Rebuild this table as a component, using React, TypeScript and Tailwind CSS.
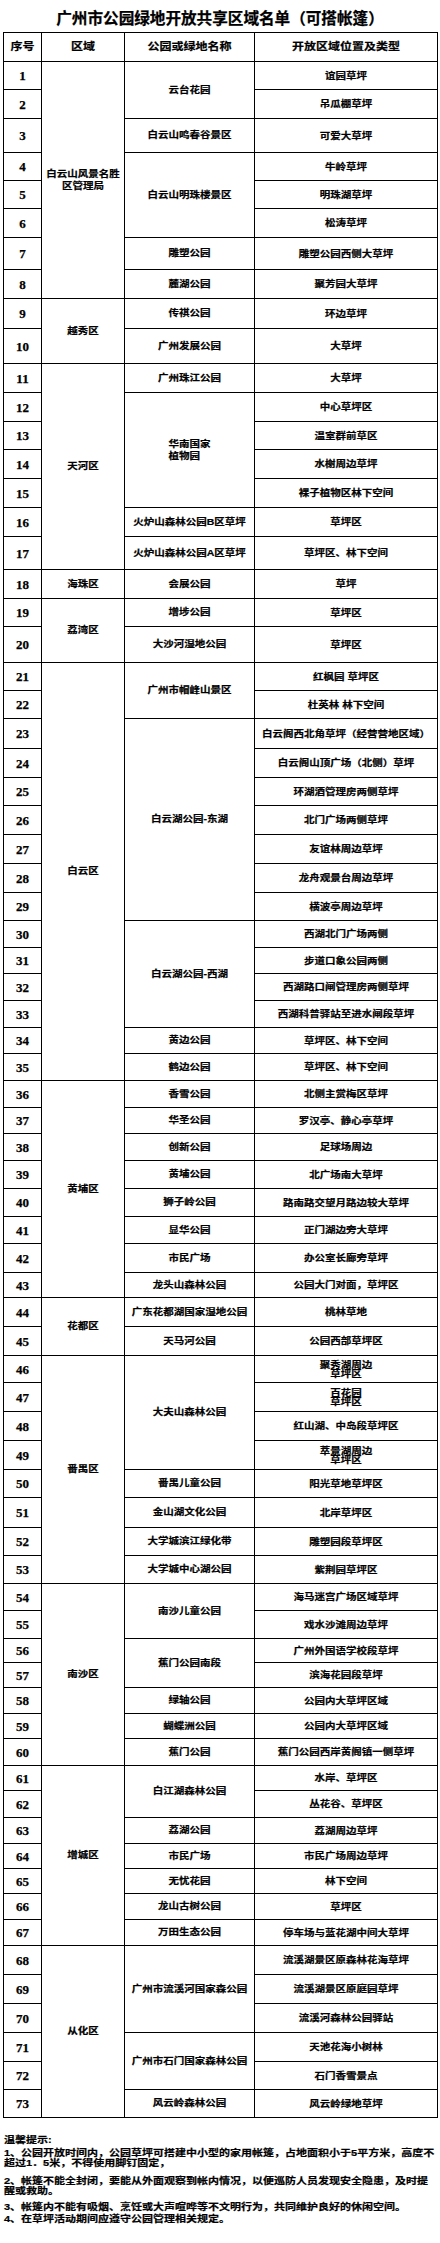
import React from 'react';

type Park = { p: string; items: string[]; left?: boolean };
type District = { d: string; parks: Park[] };

const DATA: District[] = [
  {
    d: '白云山风景名胜\n区管理局',
    parks: [
      { p: '云台花园', items: ['谊园草坪', '吊瓜棚草坪'] },
      { p: '白云山鸣春谷景区', items: ['可爱大草坪'] },
      { p: '白云山明珠楼景区', items: ['牛岭草坪', '明珠湖草坪', '松涛草坪'] },
      { p: '雕塑公园', items: ['雕塑公园西侧大草坪'] },
      { p: '麓湖公园', items: ['聚芳园大草坪'] },
    ],
  },
  {
    d: '越秀区',
    parks: [
      { p: '传祺公园', items: ['环边草坪'] },
      { p: '广州发展公园', items: ['大草坪'] },
    ],
  },
  {
    d: '天河区',
    parks: [
      { p: '广州珠江公园', items: ['大草坪'] },
      { p: '华南国家\n植物园', left: true, items: ['中心草坪区', '温室群前草区', '水榭周边草坪', '裸子植物区林下空间'] },
      { p: '火炉山森林公园B区草坪', items: ['草坪区'] },
      { p: '火炉山森林公园A区草坪', items: ['草坪区、林下空间'] },
    ],
  },
  { d: '海珠区', parks: [{ p: '会展公园', items: ['草坪'] }] },
  {
    d: '荔湾区',
    parks: [
      { p: '增埗公园', items: ['草坪区'] },
      { p: '大沙河湿地公园', items: ['草坪区'] },
    ],
  },
  {
    d: '白云区',
    parks: [
      { p: '广州市帽峰山景区', items: ['红枫园 草坪区', '杜英林 林下空间'] },
      {
        p: '白云湖公园-东湖',
        items: [
          '白云阁西北角草坪（经营营地区域）',
          '白云阁山顶广场（北侧）草坪',
          '环湖酒管理房两侧草坪',
          '北门广场两侧草坪',
          '友谊林周边草坪',
          '龙舟观景台周边草坪',
          '横波亭周边草坪',
        ],
      },
      {
        p: '白云湖公园-西湖',
        items: ['西湖北门广场两侧', '步道口象公园两侧', '西湖路口闸管理房两侧草坪', '西湖科普驿站至进水闸段草坪'],
      },
      { p: '黄边公园', items: ['草坪区、林下空间'] },
      { p: '鹤边公园', items: ['草坪区、林下空间'] },
    ],
  },
  {
    d: '黄埔区',
    parks: [
      { p: '香雪公园', items: ['北侧主赏梅区草坪'] },
      { p: '华圣公园', items: ['罗汉亭、静心亭草坪'] },
      { p: '创新公园', items: ['足球场周边'] },
      { p: '黄埔公园', items: ['北广场南大草坪'] },
      { p: '狮子岭公园', items: ['路南路交望月路边较大草坪'] },
      { p: '显华公园', items: ['正门湖边旁大草坪'] },
      { p: '市民广场', items: ['办公室长廊旁草坪'] },
      { p: '龙头山森林公园', items: ['公园大门对面，草坪区'] },
    ],
  },
  {
    d: '花都区',
    parks: [
      { p: '广东花都湖国家湿地公园', items: ['桃林草地'] },
      { p: '天马河公园', items: ['公园西部草坪区'] },
    ],
  },
  {
    d: '番禺区',
    parks: [
      { p: '大夫山森林公园', items: ['聚秀湖周边\n草坪区', '百花园\n草坪区', '红山湖、中岛段草坪区', '萃景湖周边\n草坪区'] },
      { p: '番禺儿童公园', items: ['阳光草地草坪区'] },
      { p: '金山湖文化公园', items: ['北岸草坪区'] },
      { p: '大学城滨江绿化带', items: ['雕塑园段草坪区'] },
      { p: '大学城中心湖公园', items: ['紫荆园草坪区'] },
    ],
  },
  {
    d: '南沙区',
    parks: [
      { p: '南沙儿童公园', items: ['海马迷宫广场区域草坪', '戏水沙滩周边草坪'] },
      { p: '蕉门公园南段', items: ['广州外国语学校段草坪', '滨海花园段草坪'] },
      { p: '绿轴公园', items: ['公园内大草坪区域'] },
      { p: '蝴蝶洲公园', items: ['公园内大草坪区域'] },
      { p: '蕉门公园', items: ['蕉门公园西岸黄阁镇一侧草坪'] },
    ],
  },
  {
    d: '增城区',
    parks: [
      { p: '白江湖森林公园', items: ['水岸、草坪区', '丛花谷、草坪区'] },
      { p: '荔湖公园', items: ['荔湖周边草坪'] },
      { p: '市民广场', items: ['市民广场周边草坪'] },
      { p: '无忧花园', items: ['林下空间'] },
      { p: '龙山古树公园', items: ['草坪区'] },
      { p: '万田生态公园', items: ['停车场与蓝花湖中间大草坪'] },
    ],
  },
  {
    d: '从化区',
    parks: [
      { p: '广州市流溪河国家森公园', items: ['流溪湖景区原森林花海草坪', '流溪湖景区原庭园草坪', '流溪河森林公园驿站'] },
      { p: '广州市石门国家森林公园', items: ['天池花海小树林', '石门香雪景点'] },
      { p: '风云岭森林公园', items: ['风云岭绿地草坪'] },
    ],
  },
];

const SPAN: Record<number, string> = {
  1: 'row-span-1',
  2: 'row-span-2',
  3: 'row-span-3',
  4: 'row-span-4',
  5: 'row-span-5',
  6: 'row-span-6',
  7: 'row-span-7',
  8: 'row-span-8',
  9: 'row-span-9',
  10: 'row-span-10',
  11: 'row-span-11',
  12: 'row-span-12',
  13: 'row-span-13',
  14: 'row-span-14',
  15: 'row-span-15',
};

const cellBase = 'flex items-center justify-center border-r border-b border-black overflow-visible';

function CjkText({ text, left, tight }: { text: string; left?: boolean; tight?: boolean }) {
  return (
    <span
      className={`inline-block whitespace-pre scale-y-[0.85] text-[10.5px] font-bold ${
        left ? 'text-left' : 'text-center'
      } ${tight ? 'leading-[10px]' : 'leading-[15px]'}`}
    >
      {text}
    </span>
  );
}

export default function App() {
  const cells: React.ReactNode[] = [];
  let n = 0;
  DATA.forEach((dist, di) => {
    const dCount = dist.parks.reduce((a, p) => a + p.items.length, 0);
    dist.parks.forEach((park, pi) => {
      park.items.forEach((item, ii) => {
        n += 1;
        cells.push(
          <div key={`n${n}`} className={`${cellBase} col-start-1`}>
            <span className="font-['Liberation_Serif',serif] text-[13px] font-bold leading-none">{n}</span>
          </div>
        );
        if (pi === 0 && ii === 0) {
          cells.push(
            <div key={`d${di}`} className={`${cellBase} col-start-2 ${SPAN[dCount]}`}>
              <CjkText text={dist.d} />
            </div>
          );
        }
        if (ii === 0) {
          cells.push(
            <div key={`p${di}-${pi}`} className={`${cellBase} col-start-3 ${SPAN[park.items.length]}`}>
              <CjkText text={park.p} left={park.left} />
            </div>
          );
        }
        cells.push(
          <div key={`t${n}`} className={`${cellBase} col-start-4`}>
            <CjkText text={item} tight />
          </div>
        );
      });
    });
  });

  return (
    <div className="min-h-[2243px] w-[440px] bg-white text-black [-webkit-text-stroke:0.25px_black] font-['Liberation_Sans','Noto_Sans_CJK_SC',sans-serif]">
      <div className="flex h-[32px] items-center justify-center pt-[5px]">
        <h1 className="text-[15.6px] font-bold leading-none tracking-[0px]">广州市公园绿地开放共享区域名单（可搭帐篷）</h1>
      </div>
      <div className="ml-[3px] grid w-[435px] grid-cols-[38px_83px_130px_183px] grid-rows-[29px_28px_29px_34px_28px_28px_29px_32px_29px_30px_35px_29px_29px_28px_29px_29px_29px_33px_29px_28px_36px_28px_28px_30px_29px_28px_29px_29px_29px_28px_27px_26px_27px_27px_26px_27px_27px_26px_27px_28px_28px_27px_29px_25px_29px_29px_27px_29px_29px_29px_28px_30px_28px_28px_27px_28px_24px_25px_26px_25px_27px_25px_27px_26px_25px_25px_26px_26px_29px_29px_29px_29px_28px_28px] border-l border-t border-black">
        {['序号', '区域', '公园或绿地名称', '开放区域位置及类型'].map((h) => (
          <div key={h} className={cellBase}>
            <span className="inline-block scale-y-[0.85] text-[12px] font-bold leading-none">{h}</span>
          </div>
        ))}
        {cells}
      </div>
      <div className="mt-[17px] px-[4px] text-[11px] font-bold">
        <div className="h-[10px] leading-[10px] whitespace-nowrap">
          <span className="inline-block scale-y-[0.85]">温馨提示:</span>
        </div>
        <div className="mt-[3px]">
          <div className="h-[10px] leading-[10px] whitespace-nowrap">
            <span className="inline-block scale-y-[0.85]">1、公园开放时间内，公园草坪可搭建中小型的家用帐篷，占地面积小于5平方米，高度不</span>
          </div>
          <div className="h-[10px] leading-[10px] whitespace-nowrap">
            <span className="inline-block scale-y-[0.85]">超过1．5米，不得使用脚钉固定，</span>
          </div>
        </div>
        <div className="mt-[8px]">
          <div className="h-[10px] leading-[10px] whitespace-nowrap">
            <span className="inline-block scale-y-[0.85]">2、帐篷不能全封闭，要能从外面观察到帐内情况，以便巡防人员发现安全隐患，及时提</span>
          </div>
          <div className="h-[10px] leading-[10px] whitespace-nowrap">
            <span className="inline-block scale-y-[0.85]">醒或救助。</span>
          </div>
        </div>
        <div className="mt-[6px] h-[10px] leading-[10px] whitespace-nowrap">
          <span className="inline-block scale-y-[0.85]">3、帐篷内不能有吸烟、烹饪或大声喧哗等不文明行为，共同维护良好的休闲空间。</span>
        </div>
        <div className="mt-[2px] h-[10px] leading-[10px] whitespace-nowrap">
          <span className="inline-block scale-y-[0.85]">4、在草坪活动期间应遵守公园管理相关规定。</span>
        </div>
      </div>
    </div>
  );
}
